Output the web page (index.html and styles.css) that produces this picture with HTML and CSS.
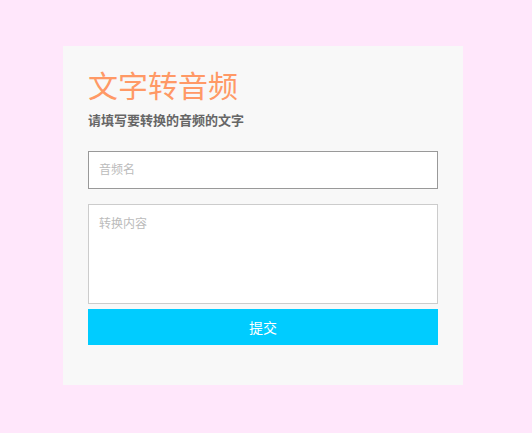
FILE: index.html
```html
<!DOCTYPE html>
<html lang="zh">
<head>
<meta charset="utf-8">
<title>文字转音频</title>
<link rel="stylesheet" href="styles.css">
</head>
<body>
<div class="page">
  <form class="card">
    <h1 class="title">文字转音频</h1>
    <p class="subtitle">请填写要转换的音频的文字</p>
    <input class="field" type="text" placeholder="音频名" autofocus>
    <textarea class="area" placeholder="转换内容"></textarea>
    <button class="submit" type="button">提交</button>
  </form>
</div>
</body>
</html>
```
FILE: styles.css
```css
html, body {
  margin: 0;
  padding: 0;
  background: #ffe7fb;
  font-family: "Liberation Sans", "Noto Sans CJK SC", sans-serif;
}
.page {
  padding: 46px 0 0 63px;
}
.card {
  box-sizing: border-box;
  width: 400px;
  background: #f8f8f8;
  padding: 21px 25px 40px;
  display: flex;
  flex-direction: column;
}
.title {
  margin: 0;
  font-size: 30px;
  line-height: 40px;
  font-weight: normal;
  color: #ff9966;
}
.subtitle {
  margin: 4px 0 20px;
  font-size: 13px;
  line-height: 20px;
  font-weight: bold;
  color: #666;
}
.field, .area {
  box-sizing: border-box;
  width: 350px;
  margin: 0;
  background: #fff;
  font-family: inherit;
  font-size: 12px;
  color: #333;
  outline: none;
  caret-color: #000;
}
.field {
  height: 38px;
  border: 1px solid #999;
  padding: 0 10px;
}
.area {
  height: 100px;
  margin-top: 15px;
  border: 1px solid #ccc;
  padding: 10px;
  resize: none;
  line-height: 18px;
}
.field::placeholder, .area::placeholder {
  color: #bbb;
}
.submit {
  margin-top: 5px;
  width: 350px;
  height: 36px;
  border: none;
  background: #00ccff;
  color: #fff;
  font-family: inherit;
  font-size: 14px;
  padding: 0;
}
```
